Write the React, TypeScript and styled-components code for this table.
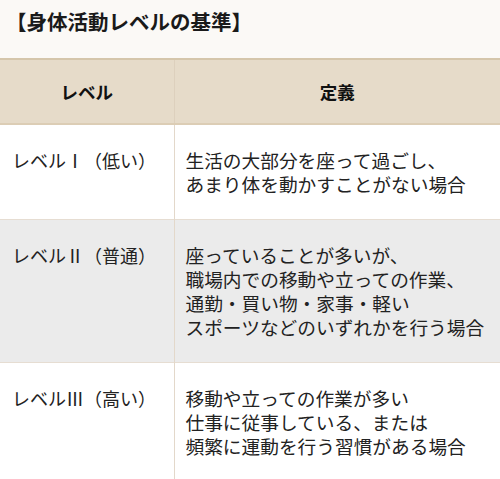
import * as React from 'react'
import styled, { createGlobalStyle } from 'styled-components'

interface ILevel {
  name: string
  lines: string[]
}

const levels: ILevel[] = [
  {
    name: 'レベルⅠ（低い）',
    lines: ['生活の大部分を座って過ごし、', 'あまり体を動かすことがない場合']
  },
  {
    name: 'レベルⅡ（普通）',
    lines: [
      '座っていることが多いが、',
      '職場内での移動や立っての作業、',
      '通勤・買い物・家事・軽い',
      'スポーツなどのいずれかを行う場合'
    ]
  },
  {
    name: 'レベルⅢ（高い）',
    lines: [
      '移動や立っての作業が多い',
      '仕事に従事している、または',
      '頻繁に運動を行う習慣がある場合'
    ]
  }
]

const App = () => (
  <Page>
    <GlobalStyle />
    <Title>【身体活動レベルの基準】</Title>
    <Table>
      <colgroup>
        <col style={{ width: 174 }} />
        <col />
      </colgroup>
      <thead>
        <tr>
          <HeadCell>レベル</HeadCell>
          <HeadCell>定義</HeadCell>
        </tr>
      </thead>
      <tbody>
        {levels.map((level, i) => (
          <Row key={level.name} shaded={i % 2 === 1}>
            <NameCell>{level.name}</NameCell>
            <DefCell>
              {level.lines.map((line, j) => (
                <React.Fragment key={line}>
                  {j > 0 && <br />}
                  {line}
                </React.Fragment>
              ))}
            </DefCell>
          </Row>
        ))}
      </tbody>
    </Table>
  </Page>
)

const GlobalStyle = createGlobalStyle`
  html, body {
    margin: 0;
    padding: 0;
    background: #fbf9f6;
  }
`

const Page = styled.div`
  width: 500px;
  height: 479px;
  overflow: hidden;
  color: #222;
  font-family: 'Noto Sans CJK JP', 'Noto Sans', sans-serif;
`

const Title = styled.h3`
  margin: 0;
  padding: 7px 0 23px 6px;
  font-size: 20.5px;
  line-height: 28px;
  font-weight: 700;
  color: #1a1a1a;
`

const Table = styled.table`
  width: 500px;
  border-collapse: collapse;
  table-layout: fixed;
`

const HeadCell = styled.th`
  background: #e6dbc9;
  border-top: 2px solid #d5c6ab;
  border-bottom: 2px solid #dccdb5;
  border-right: 1px solid #ddd0bd;
  height: 63px;
  padding: 0;
  font-size: 17.5px;
  font-weight: 700;
  text-align: center;
  vertical-align: middle;
  color: #111;

  &:last-child {
    border-right: none;
  }
`

const Row = styled.tr<{ shaded: boolean }>`
  background: ${p => (p.shaded ? '#ebebeb' : '#ffffff')};
  border-bottom: 1px solid #e6ddd2;
`

const NameCell = styled.td`
  vertical-align: top;
  padding: 23px 8px 23px 12px;
  font-size: 18px;
  line-height: 24px;
  border-right: 1px solid #e3d8ca;
  white-space: nowrap;
`

const DefCell = styled.td`
  vertical-align: top;
  padding: 23px 4px 23px 11px;
  font-size: 18.7px;
  line-height: 24px;
  white-space: nowrap;
`

export default App
